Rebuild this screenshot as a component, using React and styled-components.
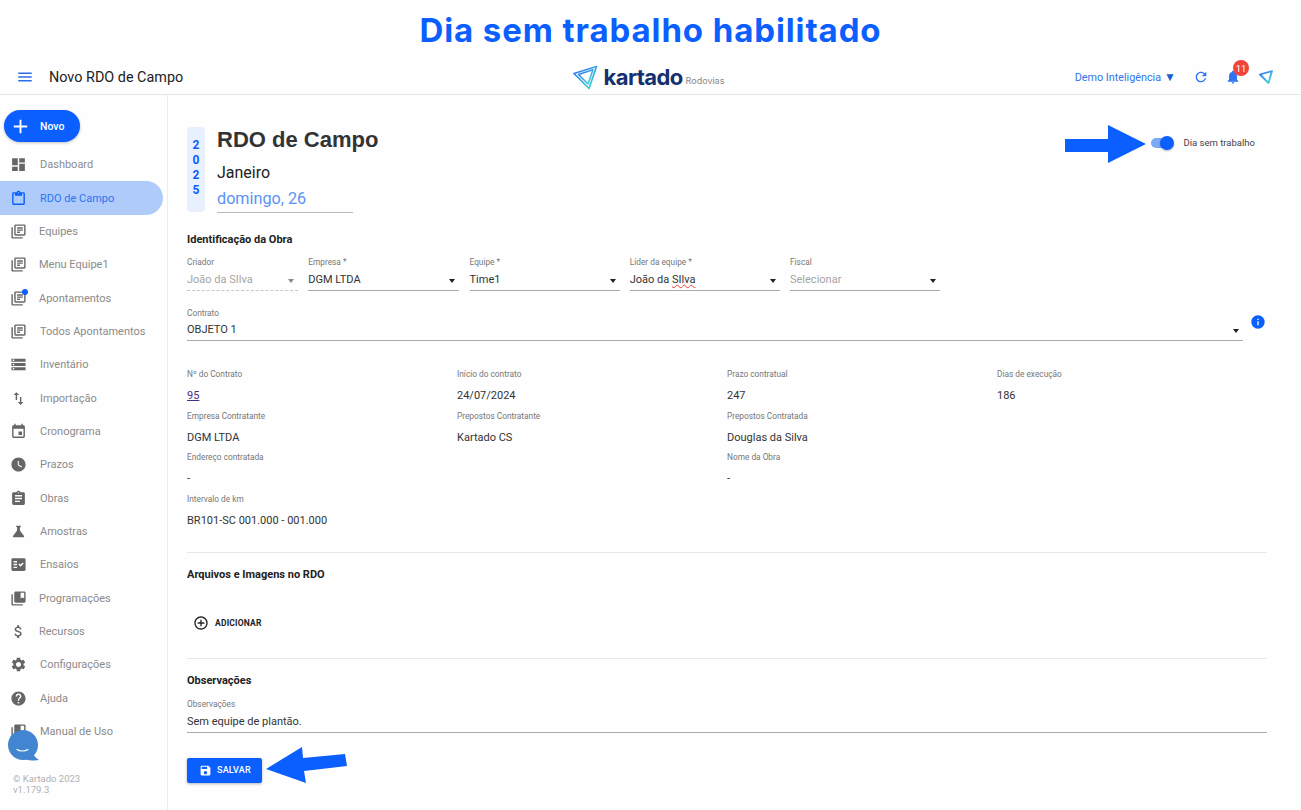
import React from "react"
import styled, { createGlobalStyle } from "styled-components"

const BLUE = "#0b5fff"

const icons = {
  menu: "M3 18h18v-2H3v2zm0-5h18v-2H3v2zm0-7v2h18V6H3z",
  add: "M19 13h-6v6h-2v-6H5v-2h6V5h2v6h6v2z",
  dashboard: "M3 13h8V3H3v10zm0 8h8v-6H3v6zm10 0h8V11h-8v10zm0-18v6h8V3h-8z",
  clipboard: "M19 3h-4.18C14.4 1.84 13.3 1 12 1c-1.3 0-2.4.84-2.82 2H5c-1.1 0-2 .9-2 2v14c0 1.1.9 2 2 2h14c1.1 0 2-.9 2-2V5c0-1.1-.9-2-2-2zm-7 0c.55 0 1 .45 1 1s-.45 1-1 1-1-.45-1-1 .45-1 1-1zm7 16H5V5h2v3h10V5h2v14z",
  books: "M4 6H2v14c0 1.1.9 2 2 2h14v-2H4V6zm16-4H8c-1.1 0-2 .9-2 2v12c0 1.1.9 2 2 2h12c1.1 0 2-.9 2-2V4c0-1.1-.9-2-2-2zm0 14H8V4h12v12zM10 9h8v2h-8zm0 3h4v2h-4zm0-6h8v2h-8z",
  storage: "M2 20h20v-4H2v4zm2-3h2v2H4v-2zM2 4v4h20V4H2zm4 3H4V5h2v2zm-4 7h20v-4H2v4zm2-3h2v2H4v-2z",
  importExport: "M9 3L5 6.99h3V14h2V6.99h3L9 3zm7 14.01V10h-2v7.01h-3L15 21l4-3.99h-3z",
  event: "M17 12h-5v5h5v-5zM16 1v2H8V1H6v2H5c-1.11 0-1.99.9-1.99 2L3 19c0 1.1.89 2 2 2h14c1.1 0 2-.9 2-2V5c0-1.1-.9-2-2-2h-1V1h-2zm3 18H5V8h14v11z",
  clock: "M12 2C6.5 2 2 6.5 2 12s4.5 10 10 10 10-4.5 10-10S17.5 2 12 2zm4.2 14.2L11 13V7h1.5v5.2l4.5 2.7-.8 1.3z",
  assignment: "M19 3h-4.18C14.4 1.84 13.3 1 12 1c-1.3 0-2.4.84-2.82 2H5c-1.1 0-2 .9-2 2v14c0 1.1.9 2 2 2h14c1.1 0 2-.9 2-2V5c0-1.1-.9-2-2-2zm-7 0c.55 0 1 .45 1 1s-.45 1-1 1-1-.45-1-1 .45-1 1-1zm2 14H7v-2h7v2zm3-4H7v-2h10v2zm0-4H7V7h10v2z",
  flask: "M19.8 18.4L14 10.67V6.5l1.35-1.69c.26-.33.03-.81-.39-.81H9.04c-.42 0-.65.48-.39.81L10 6.5v4.17L4.2 18.4c-.49.66-.02 1.6.8 1.6h14c.82 0 1.29-.94.8-1.6z",
  factCheck: "M20 3H4c-1.1 0-2 .9-2 2v14c0 1.1.9 2 2 2h16c1.1 0 2-.9 2-2V5c0-1.1-.9-2-2-2zM10 17H5v-2h5v2zm0-4H5v-2h5v2zm0-4H5V7h5v2zm4.82 6L12 12.16l1.41-1.41 1.41 1.42L17.99 9l1.42 1.42L14.82 15z",
  bookmark: "M4 6H2v14c0 1.1.9 2 2 2h14v-2H4V6zm16-4H8c-1.1 0-2 .9-2 2v12c0 1.1.9 2 2 2h12c1.1 0 2-.9 2-2V4c0-1.1-.9-2-2-2zm0 10l-2.5-1.5L15 12V4h5v8z",
  money: "M11.8 10.9c-2.27-.59-3-1.2-3-2.15 0-1.09 1.01-1.85 2.7-1.85 1.78 0 2.44.85 2.5 2.1h2.21c-.07-1.72-1.12-3.3-3.21-3.81V3h-3v2.16c-1.94.42-3.5 1.68-3.5 3.61 0 2.31 1.91 3.46 4.7 4.13 2.5.6 3 1.48 3 2.41 0 .69-.49 1.79-2.7 1.79-2.06 0-2.87-.92-2.98-2.1h-2.2c.12 2.19 1.76 3.42 3.68 3.83V21h3v-2.15c1.95-.37 3.5-1.5 3.5-3.55 0-2.84-2.43-3.81-4.7-4.4z",
  settings: "M19.14 12.94c.04-.3.06-.61.06-.94 0-.32-.02-.64-.07-.94l2.03-1.58c.18-.14.23-.41.12-.61l-1.92-3.32c-.12-.22-.37-.29-.59-.22l-2.39.96c-.5-.38-1.03-.7-1.62-.94l-.36-2.54c-.04-.24-.24-.41-.48-.41h-3.84c-.24 0-.43.17-.47.41l-.36 2.54c-.59.24-1.13.57-1.62.94l-2.39-.96c-.22-.08-.47 0-.59.22L2.74 8.87c-.12.21-.08.47.12.61l2.03 1.58c-.05.3-.09.63-.09.94s.02.64.07.94l-2.03 1.58c-.18.14-.23.41-.12.61l1.92 3.32c.12.22.37.29.59.22l2.39-.96c.5.38 1.03.7 1.62.94l.36 2.54c.05.24.24.41.48.41h3.84c.24 0 .44-.17.47-.41l.36-2.54c.59-.24 1.13-.56 1.62-.94l2.39.96c.22.08.47 0 .59-.22l1.92-3.32c.12-.22.07-.47-.12-.61l-2.01-1.58zM12 15.6c-1.98 0-3.6-1.62-3.6-3.6s1.62-3.6 3.6-3.6 3.6 1.62 3.6 3.6-1.62 3.6-3.6 3.6z",
  help: "M12 2C6.48 2 2 6.48 2 12s4.48 10 10 10 10-4.48 10-10S17.52 2 12 2zm1 17h-2v-2h2v2zm2.07-7.75l-.9.92C13.45 12.9 13 13.5 13 15h-2v-.5c0-1.1.45-2.1 1.17-2.83l1.24-1.26c.37-.36.59-.86.59-1.41 0-1.1-.9-2-2-2s-2 .9-2 2H8c0-2.21 1.79-4 4-4s4 1.79 4 4c0 .88-.36 1.68-.93 2.25z",
  refresh: "M17.65 6.35C16.2 4.9 14.21 4 12 4c-4.42 0-7.99 3.58-7.99 8s3.57 8 7.99 8c3.73 0 6.84-2.55 7.73-6h-2.08c-.82 2.33-3.04 4-5.65 4-3.31 0-6-2.69-6-6s2.69-6 6-6c1.66 0 3.14.69 4.22 1.78L13 11h7V4l-2.35 2.35z",
  bell: "M12 22c1.1 0 2-.9 2-2h-4c0 1.1.89 2 2 2zm6-6v-5c0-3.07-1.64-5.64-4.5-6.32V4c0-.83-.67-1.5-1.5-1.5s-1.5.67-1.5 1.5v.68C7.63 5.36 6 7.92 6 11v5l-2 2v1h16v-1l-2-2z",
  save: "M17 3H5c-1.11 0-2 .9-2 2v14c0 1.1.89 2 2 2h14c1.1 0 2-.9 2-2V7l-4-4zm-5 16c-1.66 0-3-1.34-3-3s1.34-3 3-3 3 1.34 3 3-1.34 3-3 3zm3-10H5V5h10v4z",
  addCircle: "M13 7h-2v4H7v2h4v4h2v-4h4v-2h-4V7zm-1-5C6.48 2 2 6.48 2 12s4.48 10 10 10 10-4.48 10-10S17.52 2 12 2zm0 18c-4.41 0-8-3.59-8-8s3.59-8 8-8 8 3.59 8 8-3.59 8-8 8z",
  info: "M12 2C6.48 2 2 6.48 2 12s4.48 10 10 10 10-4.48 10-10S17.52 2 12 2zm1 15h-2v-6h2v6zm0-8h-2V7h2v2z",
}

const navItems = [
  { label: "Dashboard", icon: "dashboard" },
  { label: "RDO de Campo", icon: "clipboard", active: true },
  { label: "Equipes", icon: "books", tight: true },
  { label: "Menu Equipe1", icon: "books", tight: true },
  { label: "Apontamentos", icon: "books", tight: true, dot: true },
  { label: "Todos Apontamentos", icon: "books" },
  { label: "Inventário", icon: "storage" },
  { label: "Importação", icon: "importExport" },
  { label: "Cronograma", icon: "event" },
  { label: "Prazos", icon: "clock" },
  { label: "Obras", icon: "assignment" },
  { label: "Amostras", icon: "flask" },
  { label: "Ensaios", icon: "factCheck" },
  { label: "Programações", icon: "bookmark", tight: true },
  { label: "Recursos", icon: "money", tight: true },
  { label: "Configurações", icon: "settings" },
  { label: "Ajuda", icon: "help" },
  { label: "Manual de Uso", icon: "bookmark" },
]

const selects = [
  { label: "Criador", value: "João da SIlva", disabled: true },
  { label: "Empresa *", value: "DGM LTDA" },
  { label: "Equipe *", value: "Time1" },
  { label: "Líder da equipe *", value: "João da SIlva", typo: true },
  { label: "Fiscal", value: "Selecionar", placeholder: true },
]

// null keeps an empty column in the grid
const infoCells = [
  { label: "Nº do Contrato", value: "95", link: true },
  { label: "Início do contrato", value: "24/07/2024" },
  { label: "Prazo contratual", value: "247" },
  { label: "Dias de execução", value: "186" },
  { label: "Empresa Contratante", value: "DGM LTDA" },
  { label: "Prepostos Contratante", value: "Kartado CS" },
  { label: "Prepostos Contratada", value: "Douglas da Silva" },
  null,
  { label: "Endereço contratada", value: "-" },
  null,
  { label: "Nome da Obra", value: "-" },
  null,
  { label: "Intervalo de km", value: "BR101-SC 001.000 - 001.000" },
]

const GlobalStyle = createGlobalStyle`
  html, body {
    margin: 0;
    padding: 0;
    background: #fefefe;
  }
  body {
    font-family: Roboto, "Liberation Sans", sans-serif;
    color: #2b2b2b;
    overflow: hidden;
  }
`
const Page = styled.div`
  position: relative;
  width: 1301px;
  height: 810px;
  display: flex;
  flex-direction: column;
  overflow: hidden;
`
const Banner = styled.h1`
  height: 60px;
  margin: 0;
  flex: none;
  display: flex;
  align-items: center;
  justify-content: center;
  font-family: Inter, "Open Sans", sans-serif;
  font-size: 33px;
  letter-spacing: 0.9px;
  font-weight: 700;
  color: ${BLUE};
`
const TopBar = styled.header`
  height: 34px;
  flex: none;
  display: grid;
  grid-template-columns: 1fr auto 1fr;
  align-items: center;
  border-bottom: 1px solid #e6e6e6;
  padding: 0 28px;
`
const TopLeft = styled.div`
  display: flex;
  align-items: center;
  gap: 15px;
  margin-left: -12px;
  font-size: 14.4px;
  color: #222;
  svg {
    color: #2b6de8;
  }
`
const TopRight = styled.div`
  display: flex;
  align-items: center;
  justify-content: flex-end;
  color: #2f74f0;
`
const Org = styled.span`
  font-size: 10.8px;
  margin-right: 17px;
`
const OrgArrow = styled.span`
  font-size: 12px;
  margin-left: 3px;
  color: #1f5fd0;
`
const Bell = styled.span`
  position: relative;
  display: flex;
  margin: 0 18px 0 16px;
`
const Badge = styled.span`
  position: absolute;
  top: -9px;
  left: 8px;
  width: 16px;
  height: 16px;
  border-radius: 50%;
  background: #f04438;
  color: #fff;
  font-size: 9.5px;
  display: flex;
  align-items: center;
  justify-content: center;
`
const Logo = styled.div`
  display: flex;
  align-items: flex-end;
  margin-left: -4px;
`
const LogoName = styled.span`
  font-family: Inter, Lato, sans-serif;
  font-weight: 700;
  font-size: 22px;
  line-height: 26px;
  letter-spacing: -0.6px;
  color: #14306e;
  margin: 0 3px 0 6px;
`
const LogoSub = styled.span`
  font-family: Inter, Lato, sans-serif;
  font-size: 9px;
  line-height: 18px;
  color: #8a8a8a;
`
const Body = styled.div`
  flex: 1;
  display: flex;
  min-height: 0;
`
const Sidebar = styled.aside`
  width: 167px;
  flex: none;
  display: flex;
  flex-direction: column;
  border-right: 1px solid #ececec;
  padding-top: 15px;
`
const NewButton = styled.button`
  width: 76px;
  height: 32px;
  margin-left: 4px;
  padding: 0 0 0 5px;
  border: 0;
  border-radius: 16px;
  background: ${BLUE};
  color: #fff;
  font: 500 10.5px Roboto, sans-serif;
  display: flex;
  align-items: center;
  gap: 8px;
  box-shadow: 0 1px 3px rgba(0, 0, 0, 0.25);
`
const NavList = styled.nav`
  display: flex;
  flex-direction: column;
  margin-top: 6px;
`
const NavItem = styled.div`
  position: relative;
  height: 33.35px;
  width: 163px;
  display: flex;
  align-items: center;
  padding-left: 10px;
  box-sizing: border-box;
  gap: ${props => (props.$tight ? "12px" : "13px")};
  font-size: 11px;
  color: ${props => (props.$active ? "#2f74f0" : "#8b8b8b")};
  background: ${props => (props.$active ? "#aecbfa" : "transparent")};
  border-radius: ${props => (props.$active ? "0 17px 17px 0" : "0")};
  svg {
    color: ${props => (props.$active ? BLUE : "#666")};
  }
`
const NavDot = styled.span`
  position: absolute;
  top: 8px;
  left: 22px;
  width: 6px;
  height: 6px;
  border-radius: 50%;
  background: ${BLUE};
`
const Copyright = styled.div`
  margin: auto 0 15px 13px;
  font-size: 9.5px;
  line-height: 11px;
  color: #b0b0b0;
`
const Main = styled.main`
  flex: 1;
  padding: 32px 34px 0 19px;
  min-width: 0;
`
const HeadRow = styled.div`
  display: flex;
  align-items: flex-start;
`
const YearPill = styled.div`
  width: 18px;
  height: 85px;
  border-radius: 4px;
  background: #e8f0fe;
  color: ${BLUE};
  font-size: 12px;
  font-weight: 700;
  line-height: 15px;
  text-align: center;
  padding-top: 11px;
  box-sizing: border-box;
  margin-right: 12px;
`
const DateBlock = styled.div`
  display: flex;
  flex-direction: column;
  width: 136px;
`
const PageTitle = styled.h2`
  margin: 0;
  white-space: nowrap;
  font-family: "Liberation Sans", Arial, sans-serif;
  font-size: 22px;
  line-height: 25px;
  font-weight: 700;
  color: #333;
`
const Month = styled.div`
  margin-top: 11px;
  font-size: 16px;
  line-height: 20px;
  color: #222;
`
const Day = styled.div`
  margin-top: 5px;
  font-size: 16.2px;
  line-height: 22px;
  padding-bottom: 2px;
  color: #5a93f5;
  border-bottom: 1px solid #bbb;
`
const NoWorkToggle = styled.label`
  margin: 10px 12px 0 auto;
  display: flex;
  align-items: center;
  gap: 12px;
  font-size: 9.5px;
  color: #444;
`
const Track = styled.span`
  position: relative;
  width: 21px;
  height: 10px;
  border-radius: 5px;
  background: #7baaf7;
`
const Thumb = styled.span`
  position: absolute;
  top: -2px;
  right: -2px;
  width: 14px;
  height: 14px;
  border-radius: 50%;
  background: ${BLUE};
  box-shadow: 0 1px 2px rgba(0, 0, 0, 0.3);
`
const SectionTitle = styled.h3`
  margin: ${props => props.$top || 0}px 0 0;
  font-size: 11px;
  line-height: 14px;
  font-weight: 700;
  color: #222;
`
const SelectGrid = styled.div`
  display: grid;
  grid-template-columns: 111px 151px 150px 150px 150px;
  column-gap: 10.25px;
  margin-top: 9px;
`
const Field = styled.div`
  display: flex;
  flex-direction: column;
`
const FieldLabel = styled.span`
  font-size: 8.3px;
  line-height: 12px;
  color: #777;
`
const SelectBox = styled.div`
  display: flex;
  align-items: center;
  justify-content: space-between;
  height: ${props => (props.$compact ? 22 : 23)}px;
  padding: ${props => (props.$compact ? "0 4px 1px 0" : "0 4px 0 0")};
  box-sizing: border-box;
  font-size: 11px;
  color: ${props => (props.$muted ? "#a5a5a5" : "#333")};
  border-bottom: 1px ${props => (props.$dashed ? "dashed #c8c8c8" : "solid #aaa")};
`
const Caret = styled.span`
  width: 0;
  height: 0;
  margin-top: 3px;
  border-left: 3.5px solid transparent;
  border-right: 3.5px solid transparent;
  border-top: 4px solid ${props => (props.$muted ? "#888" : "#222")};
`
const Typo = styled.span`
  text-decoration: underline wavy #e0413a 1px;
`
const ContractRow = styled.div`
  display: flex;
  align-items: flex-start;
  margin-top: 16px;
  gap: 7px;
`
const ContractField = styled(Field)`
  flex: 1;
`
const InfoButton = styled.span`
  display: flex;
  color: ${BLUE};
  margin: 0 1px 0 0;
  padding-top: 7px;
`
const InfoGrid = styled.div`
  display: grid;
  grid-template-columns: repeat(4, 270px);
  grid-auto-rows: 41.7px;
  margin-top: 27px;
`
const InfoCell = styled.div`
  display: flex;
  flex-direction: column;
  gap: 9px;
`
const InfoValue = styled.span`
  font-size: 11px;
  line-height: 14px;
  color: #333;
`
const ContractLink = styled.a`
  color: #4a2d8c;
  text-decoration: underline;
`
const Divider = styled.hr`
  margin: ${props => props.$top}px 0 0;
  border: 0;
  border-top: 1px solid #e8e8e8;
`
const AddButton = styled.button`
  display: flex;
  align-items: center;
  gap: 6px;
  margin: 33px 0 0 6px;
  padding: 0;
  border: 0;
  background: none;
  font: 700 8.5px Roboto, sans-serif;
  letter-spacing: 0.2px;
  color: #222;
`
const NotesBox = styled.div`
  margin-top: 10px;
  display: flex;
  flex-direction: column;
`
const NotesValue = styled.div`
  margin-top: 5px;
  padding-bottom: 3px;
  font-size: 11px;
  line-height: 14px;
  color: #333;
  border-bottom: 1px solid #aaa;
`
const SaveButton = styled.button`
  display: flex;
  align-items: center;
  gap: 5px;
  width: 75px;
  height: 25px;
  margin-top: 25px;
  padding: 0 0 0 12px;
  border: 0;
  border-radius: 2px;
  background: ${BLUE};
  color: #fff;
  font: 500 9px Roboto, sans-serif;
  letter-spacing: 0.2px;
  box-shadow: 0 1px 3px rgba(0, 0, 0, 0.3);
`
const Overlay = styled.svg`
  position: absolute;
  left: ${props => props.$x}px;
  top: ${props => props.$y}px;
  pointer-events: none;
`

const Icon = ({ name, size = 16 }) => (
  <svg width={size} height={size} viewBox="0 0 24 24" fill="currentColor" style={{ flex: "none" }}>
    <path d={icons[name]} />
  </svg>
)

const MarkGradient = ({ id }) => (
  <defs>
    <linearGradient id={id} x1="0" y1="0" x2="1" y2="1">
      <stop offset="0" stopColor="#2f6cf5" />
      <stop offset="1" stopColor="#3fe0d0" />
    </linearGradient>
  </defs>
)

const LogoMark = () => (
  <svg width={25} height={25} viewBox="0 0 25 25" fill="none">
    <MarkGradient id="kartadoMark" />
    <path d="M1 8.5L23.5 1.5L16 23.5Z" stroke="url(#kartadoMark)" strokeWidth="1.7" strokeLinejoin="round" />
    <path d="M5.5 9.5L20 4.8L15 19Z" stroke="url(#kartadoMark)" strokeWidth="1.5" strokeLinejoin="round" />
  </svg>
)

const SendMark = () => (
  <svg width={14} height={14} viewBox="0 0 14 14" fill="none">
    <MarkGradient id="sendMark" />
    <path d="M1 4.5L13 1L9.5 13Z" stroke="url(#sendMark)" strokeWidth="1.8" strokeLinejoin="round" />
  </svg>
)

const App = () => (
  <Page>
    <GlobalStyle />
    <Banner>Dia sem trabalho habilitado</Banner>

    <TopBar>
      <TopLeft>
        <Icon name="menu" size={18} />
        Novo RDO de Campo
      </TopLeft>
      <Logo>
        <LogoMark />
        <LogoName>kartado</LogoName>
        <LogoSub>Rodovias</LogoSub>
      </Logo>
      <TopRight>
        <Org>Demo Inteligência<OrgArrow>▼</OrgArrow></Org>
        <Icon name="refresh" size={16} />
        <Bell>
          <Icon name="bell" size={16} />
          <Badge>11</Badge>
        </Bell>
        <SendMark />
      </TopRight>
    </TopBar>

    <Body>
      <Sidebar>
        <NewButton>
          <Icon name="add" size={23} />
          Novo
        </NewButton>
        <NavList>
          {navItems.map(item => (
            <NavItem key={item.label} $active={item.active} $tight={item.tight}>
              <Icon name={item.icon} size={17} />
              {item.label}
              {item.dot && <NavDot />}
            </NavItem>
          ))}
        </NavList>
        <Copyright>
          © Kartado 2023
          <br />
          v1.179.3
        </Copyright>
      </Sidebar>

      <Main>
        <HeadRow>
          <YearPill>2<br />0<br />2<br />5</YearPill>
          <DateBlock>
            <PageTitle>RDO de Campo</PageTitle>
            <Month>Janeiro</Month>
            <Day>domingo, 26</Day>
          </DateBlock>
          <NoWorkToggle>
            <Track><Thumb /></Track>
            Dia sem trabalho
          </NoWorkToggle>
        </HeadRow>

        <SectionTitle $top={20}>Identificação da Obra</SectionTitle>
        <SelectGrid>
          {selects.map(field => (
            <Field key={field.label}>
              <FieldLabel>{field.label}</FieldLabel>
              <SelectBox $muted={field.disabled || field.placeholder} $dashed={field.disabled}>
                {field.typo ? <span>João da <Typo>SIlva</Typo></span> : <span>{field.value}</span>}
                <Caret $muted={field.disabled} />
              </SelectBox>
            </Field>
          ))}
        </SelectGrid>

        <ContractRow>
          <ContractField>
            <FieldLabel>Contrato</FieldLabel>
            <SelectBox $compact>
              <span>OBJETO 1</span>
              <Caret />
            </SelectBox>
          </ContractField>
          <InfoButton><Icon name="info" size={16} /></InfoButton>
        </ContractRow>

        <InfoGrid>
          {infoCells.map((cell, i) => (
            <InfoCell key={i}>
              {cell && <FieldLabel>{cell.label}</FieldLabel>}
              {cell && (
                <InfoValue>
                  {cell.link ? <ContractLink>{cell.value}</ContractLink> : cell.value}
                </InfoValue>
              )}
            </InfoCell>
          ))}
        </InfoGrid>

        <Divider $top={17} />
        <SectionTitle $top={15}>Arquivos e Imagens no RDO</SectionTitle>
        <AddButton>
          <Icon name="addCircle" size={16} />
          ADICIONAR
        </AddButton>
        <Divider $top={27} />
        <SectionTitle $top={15}>Observações</SectionTitle>
        <NotesBox>
          <FieldLabel>Observações</FieldLabel>
          <NotesValue>Sem equipe de plantão.</NotesValue>
        </NotesBox>
        <SaveButton>
          <Icon name="save" size={13} />
          SALVAR
        </SaveButton>
      </Main>
    </Body>

    <Overlay $x={1060} $y={120} width={92} height={48} viewBox="0 0 92 48">
      <path d="M5 19H48V5L86 24L48 43V32H5Z" fill={BLUE} />
    </Overlay>
    <Overlay $x={262} $y={742} width={90} height={46} viewBox="0 0 90 46">
      <path d="M4 27L40 5L41 16L83 12L85 24L42 29L44 41Z" fill={BLUE} />
    </Overlay>
    <Overlay $x={6} $y={728} width={36} height={36} viewBox="0 0 36 36">
      <path d="M17 2C25.3 2 32 8.7 32 17C32 21 30.5 24.6 28 27.3C29 29 31 31 33 32C28 33 23 32 20 31.7C19 31.9 18 32 17 32C8.7 32 2 25.3 2 17S8.7 2 17 2Z" fill="#4285d0" />
      <path d="M11 21.5C14 23.5 19 23.5 22 21.5" stroke="#fff" strokeWidth="1.2" fill="none" strokeLinecap="round" />
    </Overlay>
  </Page>
)

export default App
